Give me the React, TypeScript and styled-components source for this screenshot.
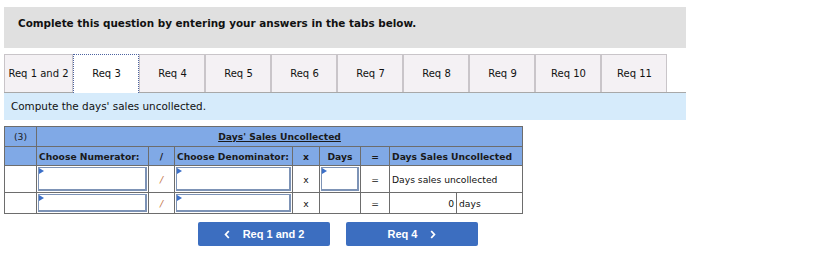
import { FC } from "react";
import styled, { createGlobalStyle } from "styled-components";

const GlobalStyle = createGlobalStyle`
  body {
    margin: 0;
    background: #fff;
    font-family: "DejaVu Sans", Verdana, sans-serif;
    color: #111;
  }
  #root {
    padding: 7px 4px;
  }
`;

const tabs = ["Req 1 and 2", "Req 3", "Req 4", "Req 5", "Req 6", "Req 7", "Req 8", "Req 9", "Req 10", "Req 11"];

const Wrap = styled.div`
  width: 682px;
`;

const Banner = styled.div`
  height: 41px;
  box-sizing: border-box;
  background: #e0e0e0;
  padding: 10px 14px;
  font-size: 10.4px;
  font-weight: 700;
`;

const TabRow = styled.div`
  display: flex;
  margin-top: 6px;
  border-bottom: 1px solid #a8a8a8;
`;

const Tab = styled.div<{ $active?: boolean; $wide?: boolean }>`
  width: ${(p) => (p.$wide ? "69px" : "66px")};
  box-sizing: border-box;
  display: flex;
  align-items: center;
  justify-content: center;
  font-size: 10px;
  background: ${(p) => (p.$active ? "#fff" : "#f4f1f4")};
  border: ${(p) => (p.$active ? "1px dotted #4d63a0" : "1px solid #c9c5c9")};
  border-bottom: none;
  margin-bottom: ${(p) => (p.$active ? "-1px" : "0")};
  height: ${(p) => (p.$active ? "39px" : "38px")};
  padding-bottom: ${(p) => (p.$active ? "1px" : "0")};
  padding-left: ${(p) => (p.$wide ? "0" : "1px")};
`;

const Instruction = styled.div`
  height: 27px;
  box-sizing: border-box;
  background: #d6ebfb;
  padding: 7px 7px;
  font-size: 10.4px;
`;

const Grid = styled.table`
  margin-top: 6px;
  border-collapse: collapse;
  table-layout: fixed;
  width: 518px;
  font-size: 9.2px;

  td, th {
    border: 1px solid #6d6d6d;
    padding: 0;
    overflow: hidden;
  }
`;

const HeadCell = styled.th<{ $align?: string; $light?: boolean }>`
  background: #80a9e6;
  font-weight: ${(p) => (p.$light ? 400 : 700)};
  text-align: ${(p) => p.$align || "center"};
  padding: 0 2px !important;
  white-space: nowrap;
  color: #1a1a1a;
`;

const Title = styled.span`
  text-decoration: underline;
`;

const Cell = styled.td<{ $align?: string }>`
  background: #fff;
  text-align: ${(p) => p.$align || "center"};
  white-space: nowrap;
  padding: 0 2px !important;
`;

const InputCell = styled.td`
  background: #fff;
  padding: 1px !important;
  vertical-align: middle;
`;

const Field = styled.div<{ $h: number }>`
  position: relative;
  height: ${(p) => p.$h}px;
  box-sizing: border-box;
  border: 1px solid #7d93b6;
  border-right-width: 2px;
  border-bottom-width: 2px;

  &::before {
    content: "";
    position: absolute;
    left: 0;
    top: 0;
    width: 5px;
    height: 6px;
    background: #3b6fc8;
    clip-path: polygon(0 0, 100% 50%, 0 100%);
  }
`;

const Slash = styled.span`
  color: #c0703a;
  font-style: italic;
`;

const Nav = styled.div`
  display: flex;
  gap: 16px;
  margin: 8px 0 0 194px;
`;

const NavButton = styled.button`
  width: 132px;
  height: 24px;
  border: none;
  border-radius: 2px;
  background: #3c6ec0;
  color: #fff;
  font-family: "Liberation Sans", Arial, sans-serif;
  font-weight: 700;
  font-size: 11px;
  display: flex;
  align-items: center;
  justify-content: center;
  gap: 13px;
  padding: 0;
`;

const Chevron: FC<{ dir: "left" | "right" }> = ({ dir }) => (
  <svg width="6" height="9" viewBox="0 0 6 9">
    <path
      d={dir === "left" ? "M4.8 1 L1.6 4.5 L4.8 8" : "M1.2 1 L4.4 4.5 L1.2 8"}
      fill="none"
      stroke="#fff"
      strokeWidth="1.8"
    />
  </svg>
);

const App: FC = () => (
  <Wrap>
    <GlobalStyle />
    <Banner>Complete this question by entering your answers in the tabs below.</Banner>
    <TabRow>
      {tabs.map((t, i) => (
        <Tab key={t} $wide={i === 0} $active={i === 1}>
          {t}
        </Tab>
      ))}
    </TabRow>
    <Instruction>Compute the days' sales uncollected.</Instruction>
    <Grid>
      <colgroup>
        <col style={{ width: 32 }} />
        <col style={{ width: 112 }} />
        <col style={{ width: 26 }} />
        <col style={{ width: 118 }} />
        <col style={{ width: 27 }} />
        <col style={{ width: 41 }} />
        <col style={{ width: 29 }} />
        <col style={{ width: 67 }} />
        <col style={{ width: 66 }} />
      </colgroup>
      <tbody>
        <tr style={{ height: 20 }}>
          <HeadCell $light>(3)</HeadCell>
          <HeadCell colSpan={8}>
            <Title>Days' Sales Uncollected</Title>
          </HeadCell>
        </tr>
        <tr style={{ height: 19 }}>
          <HeadCell />
          <HeadCell $align="left">Choose Numerator:</HeadCell>
          <HeadCell>/</HeadCell>
          <HeadCell $align="left">Choose Denominator:</HeadCell>
          <HeadCell>x</HeadCell>
          <HeadCell>Days</HeadCell>
          <HeadCell>=</HeadCell>
          <HeadCell colSpan={2} $align="left">Days Sales Uncollected</HeadCell>
        </tr>
        <tr style={{ height: 27 }}>
          <Cell />
          <InputCell><Field $h={24} /></InputCell>
          <Cell><Slash>/</Slash></Cell>
          <InputCell><Field $h={24} /></InputCell>
          <Cell>x</Cell>
          <InputCell><Field $h={24} /></InputCell>
          <Cell>=</Cell>
          <Cell colSpan={2} $align="left">Days sales uncollected</Cell>
        </tr>
        <tr style={{ height: 20 }}>
          <Cell />
          <InputCell><Field $h={18} /></InputCell>
          <Cell><Slash>/</Slash></Cell>
          <InputCell><Field $h={18} /></InputCell>
          <Cell>x</Cell>
          <Cell />
          <Cell>=</Cell>
          <Cell $align="right">0</Cell>
          <Cell $align="left">days</Cell>
        </tr>
      </tbody>
    </Grid>
    <Nav>
      <NavButton>
        <Chevron dir="left" />
        <span>Req 1 and 2</span>
      </NavButton>
      <NavButton>
        <span>Req 4</span>
        <Chevron dir="right" />
      </NavButton>
    </Nav>
  </Wrap>
);

export default App;
